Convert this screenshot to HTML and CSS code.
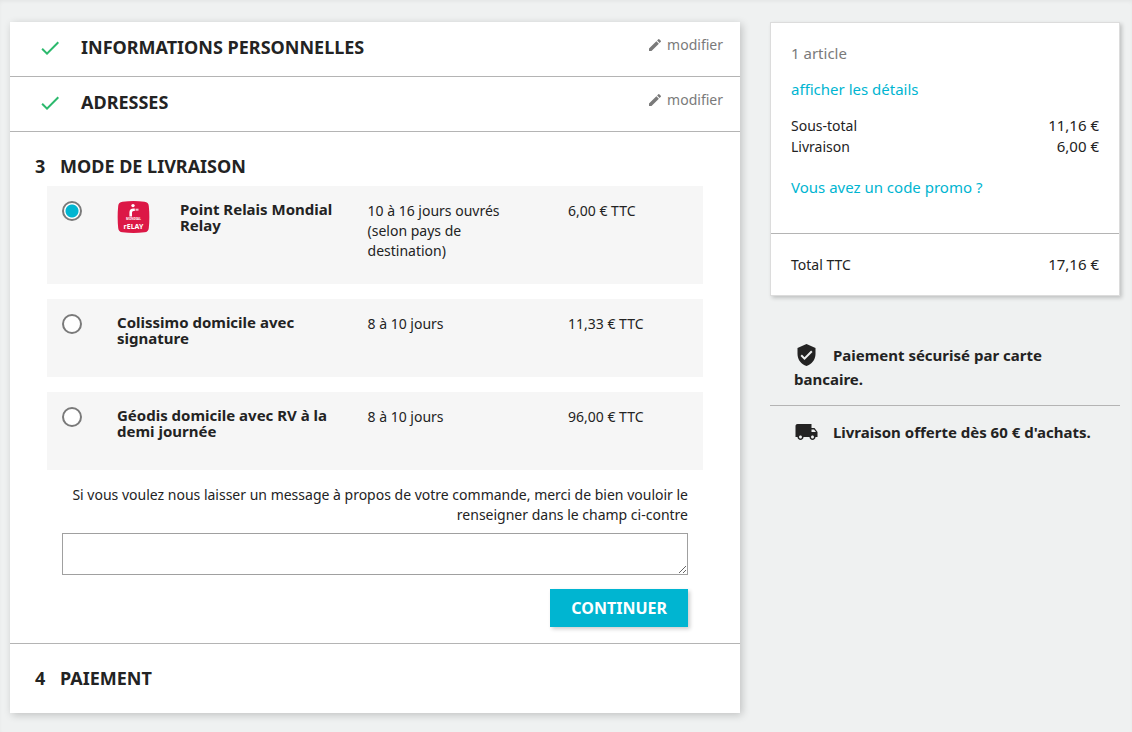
FILE: index.html
```html
<!DOCTYPE html>
<html lang="fr">
<head>
    <meta charset="utf-8">
    <meta name="viewport" content="width=device-width, initial-scale=1">
    <title>Commande</title>
    <link rel="stylesheet" href="styles.css">
</head>
<body>
    <div class="checkout">
        <main class="steps">
            <section class="step step-done">
                <svg class="icon-check" viewBox="0 0 24 24"><path d="M9 16.17L4.83 12l-1.42 1.41L9 19 21 7l-1.41-1.41z"/></svg>
                <h1 class="step-title">Informations personnelles</h1>
                <a class="step-edit" href="#">
                    <svg class="icon-edit" viewBox="0 0 24 24"><path d="M3 17.25V21h3.75L17.81 9.94l-3.75-3.75L3 17.25zM20.71 7.04a1 1 0 0 0 0-1.41l-2.34-2.34a1 1 0 0 0-1.41 0l-1.83 1.83 3.75 3.75 1.83-1.83z"/></svg>
                    modifier
                </a>
            </section>

            <section class="step step-done">
                <svg class="icon-check" viewBox="0 0 24 24"><path d="M9 16.17L4.83 12l-1.42 1.41L9 19 21 7l-1.41-1.41z"/></svg>
                <h1 class="step-title">Adresses</h1>
                <a class="step-edit" href="#">
                    <svg class="icon-edit" viewBox="0 0 24 24"><path d="M3 17.25V21h3.75L17.81 9.94l-3.75-3.75L3 17.25zM20.71 7.04a1 1 0 0 0 0-1.41l-2.34-2.34a1 1 0 0 0-1.41 0l-1.83 1.83 3.75 3.75 1.83-1.83z"/></svg>
                    modifier
                </a>
            </section>

            <section class="step step-current">
                <h1 class="step-title"><span class="step-number">3</span>Mode de livraison</h1>
                <form class="delivery-form">
                    <div class="delivery-options">
                        <label class="delivery-option" for="relay">
                            <input type="radio" class="radio" name="delivery" id="relay" checked>
                            <span class="carrier">
                                <svg class="carrier-logo" viewBox="0 0 32 32">
                                    <path class="logo-bg" d="M5 .7Q16-.7 27 .7Q31 1 31.3 5Q32.4 16 31.3 27Q31 31 27 31.3Q16 32.6 5 31.3Q1 31 .7 27Q-.4 16 .7 5Q1 1 5 .7z"/>
                                    <circle class="logo-fg" cx="15.5" cy="4.6" r="1.7"/>
                                    <path class="logo-line" d="M13.2 15.5V11.5Q13.2 8.7 16 8.7H17.3"/>
                                    <path class="logo-dots" d="M18 8.7H21"/>
                                    <text class="logo-small" x="16" y="19">MONDIAL</text>
                                    <text class="logo-name" x="16" y="28">rELAY</text>
                                </svg>
                                <span class="carrier-name">Point Relais Mondial Relay</span>
                            </span>
                            <span class="carrier-delay">10 à 16 jours ouvrés (selon pays de destination)</span>
                            <span class="carrier-price">6,00 € TTC</span>
                        </label>
                        <label class="delivery-option" for="colissimo">
                            <input type="radio" class="radio" name="delivery" id="colissimo">
                            <span class="carrier">
                                <span class="carrier-name">Colissimo domicile avec signature</span>
                            </span>
                            <span class="carrier-delay">8 à 10 jours</span>
                            <span class="carrier-price">11,33 € TTC</span>
                        </label>
                        <label class="delivery-option" for="geodis">
                            <input type="radio" class="radio" name="delivery" id="geodis">
                            <span class="carrier">
                                <span class="carrier-name">Géodis domicile avec RV à la demi journée</span>
                            </span>
                            <span class="carrier-delay">8 à 10 jours</span>
                            <span class="carrier-price">96,00 € TTC</span>
                        </label>
                    </div>

                    <div class="message">
                        <label class="message-label" for="message">Si vous voulez nous laisser un message à propos de votre commande, merci de bien vouloir le renseigner dans le champ ci-contre</label>
                        <textarea class="message-field" id="message" rows="2"></textarea>
                        <button class="btn-continue" type="submit">Continuer</button>
                    </div>
                </form>
            </section>

            <section class="step step-next">
                <h1 class="step-title"><span class="step-number">4</span>Paiement</h1>
            </section>
        </main>

        <aside class="sidebar">
            <div class="cart">
                <div class="cart-block">
                    <p class="cart-count">1 article</p>
                    <p class="cart-details"><a href="#">afficher les détails</a></p>
                    <div class="cart-line"><span>Sous-total</span><span class="value">11,16 €</span></div>
                    <div class="cart-line"><span>Livraison</span><span class="value">6,00 €</span></div>
                    <p class="cart-promo"><a href="#">Vous avez un code promo ?</a></p>
                </div>
                <div class="cart-total">
                    <div class="cart-line"><span>Total TTC</span><span class="value">17,16 €</span></div>
                </div>
            </div>

            <ul class="reassurance">
                <li>
                    <svg class="icon-reassurance" viewBox="0 0 24 24"><path d="M12 1L3 5v6c0 5.55 3.84 10.74 9 12 5.16-1.26 9-6.45 9-12V5l-9-4zm-2 16l-4-4 1.41-1.41L10 14.17l6.59-6.59L18 9l-8 8z"/></svg>
                    <span>Paiement sécurisé par carte bancaire.</span>
                </li>
                <li>
                    <svg class="icon-reassurance" viewBox="0 0 24 24"><path d="M20 8h-3V4H3c-1.1 0-2 .9-2 2v11h2c0 1.66 1.34 3 3 3s3-1.34 3-3h6c0 1.66 1.34 3 3 3s3-1.34 3-3h2v-5l-3-4zM6 18.5c-.83 0-1.5-.67-1.5-1.5s.67-1.5 1.5-1.5 1.5.67 1.5 1.5-.67 1.5-1.5 1.5zm13.5-9l1.96 2.5H17V9.5h2.5zm-1.5 9c-.83 0-1.5-.67-1.5-1.5s.67-1.5 1.5-1.5 1.5.67 1.5 1.5-.67 1.5-1.5 1.5z"/></svg>
                    <span>Livraison offerte dès 60 € d'achats.</span>
                </li>
            </ul>
        </aside>
    </div>
</body>
</html>
```
FILE: styles.css
```css
* {
    box-sizing: border-box;
}

body {
    margin: 0;
    min-height: 100vh;
    font-family: "Noto Sans", sans-serif;
    font-size: 14px;
    line-height: 20px;
    color: #232323;
    background: #eff1f1;
    box-shadow: inset 0 2px 4px -1px rgba(0, 0, 0, 0.06);
}

a {
    color: #00b5d1;
    text-decoration: none;
}

p {
    margin: 0;
}

.checkout {
    display: flex;
    align-items: flex-start;
    gap: 30px;
    padding: 22px 12px 18px 10px;
}

/* Steps */
.steps {
    flex: 1;
    background: #fff;
    box-shadow: 2px 2px 8px 0 rgba(0, 0, 0, 0.2);
}

.step {
    border-bottom: 1px solid #b4b4b4;
}

.step:last-child {
    border-bottom: 0;
}

.step-title {
    margin: 0;
    font-size: 18px;
    line-height: 24px;
    font-weight: bold;
    text-transform: uppercase;
}

.step-number {
    display: inline-block;
    width: 25px;
}

.step-done {
    display: flex;
    align-items: flex-start;
    padding: 13px 17px 16px 28px;
}

.icon-check {
    width: 24px;
    height: 24px;
    margin: 1px 19px 0 0;
    fill: #2cb96d;
}

.step-edit {
    display: flex;
    align-items: center;
    gap: 4px;
    margin-left: auto;
    font-size: 14px;
    line-height: 20px;
    color: #7a7a7a;
}

.icon-edit {
    width: 16px;
    height: 16px;
    fill: #7a7a7a;
}

.step-current {
    padding: 22px 25px 16px;
}

.step-next {
    padding: 22px 25px 23px;
}

/* Delivery */
.delivery-form {
    padding: 8px 12px 0;
}

.delivery-options {
    display: grid;
    gap: 15px;
}

.delivery-option {
    display: grid;
    grid-template-columns: 55px 5fr 4fr 120px;
    align-items: start;
    padding: 15px 15px 23px;
    min-height: 78px;
    background: #f6f6f6;
    cursor: pointer;
}

.radio {
    appearance: none;
    width: 20px;
    height: 20px;
    margin: 0;
    border: 2px solid #7a7a7a;
    border-radius: 50%;
    background: #fff;
}

.radio:checked {
    background: radial-gradient(circle, #00b5d1 6px, #fff 7px);
}

.carrier {
    display: flex;
    gap: 30px;
    padding-right: 30px;
}

.carrier-logo {
    flex: none;
    width: 33px;
    height: 32px;
}

.logo-bg {
    fill: #dc1846;
}

.logo-fg {
    fill: #fff;
}

.logo-line {
    fill: none;
    stroke: #fff;
    stroke-width: 2.6;
}

.logo-dots {
    stroke: #f6c3cf;
    stroke-width: 2;
}

.logo-small,
.logo-name {
    fill: #fff;
    font-family: "Noto Sans", sans-serif;
    font-weight: bold;
    text-anchor: middle;
}

.logo-small {
    font-size: 3px;
}

.logo-name {
    font-size: 7px;
}

.carrier-name {
    font-size: 15px;
    line-height: 16px;
    font-weight: bold;
}

.carrier-delay {
    padding-right: 30px;
}

.message {
    display: flex;
    flex-direction: column;
    padding: 15px 15px 0;
}

.message-label {
    text-align: right;
}

.message-field {
    height: 42px;
    margin-top: 8px;
    border: 1px solid #a0a0a0;
    background: #fff;
    font: inherit;
    resize: vertical;
}

.btn-continue {
    align-self: flex-end;
    margin-top: 14px;
    padding: 8px 21px;
    border: 0;
    background: #00b5d1;
    box-shadow: 2px 2px 4px 0 rgba(0, 0, 0, 0.2);
    color: #fff;
    font-family: inherit;
    font-size: 16px;
    line-height: 22px;
    font-weight: bold;
    text-transform: uppercase;
    cursor: pointer;
}

/* Sidebar */
.sidebar {
    width: 32%;
    max-width: 350px;
}

.cart {
    border: 1px solid #dcdcdc;
    background: #fff;
    box-shadow: 2px 2px 4px 0 rgba(0, 0, 0, 0.2);
}

.cart-block {
    padding: 20px 20px 35px;
    border-bottom: 1px solid #b4b4b4;
    font-size: 15px;
}

.cart-count {
    line-height: 21px;
    color: #7a7a7a;
}

.cart-details {
    padding: 15px 0;
    line-height: 21px;
}

.cart-promo {
    padding-top: 20px;
    line-height: 21px;
}

.cart-line {
    display: flex;
    justify-content: space-between;
    font-size: 14px;
    line-height: 21px;
}

.value {
    font-size: 15px;
}

.cart-total {
    padding: 20px;
}

.reassurance {
    margin: 33px 0 0;
    padding: 0;
    list-style: none;
    font-size: 15px;
    line-height: 24px;
    font-weight: bold;
}

.reassurance li {
    padding: 14px 24px;
}

.reassurance li + li {
    border-top: 1px solid #b4b4b4;
}

.icon-reassurance {
    width: 25px;
    height: 24px;
    margin-right: 10px;
    vertical-align: top;
    fill: #232323;
}
```
